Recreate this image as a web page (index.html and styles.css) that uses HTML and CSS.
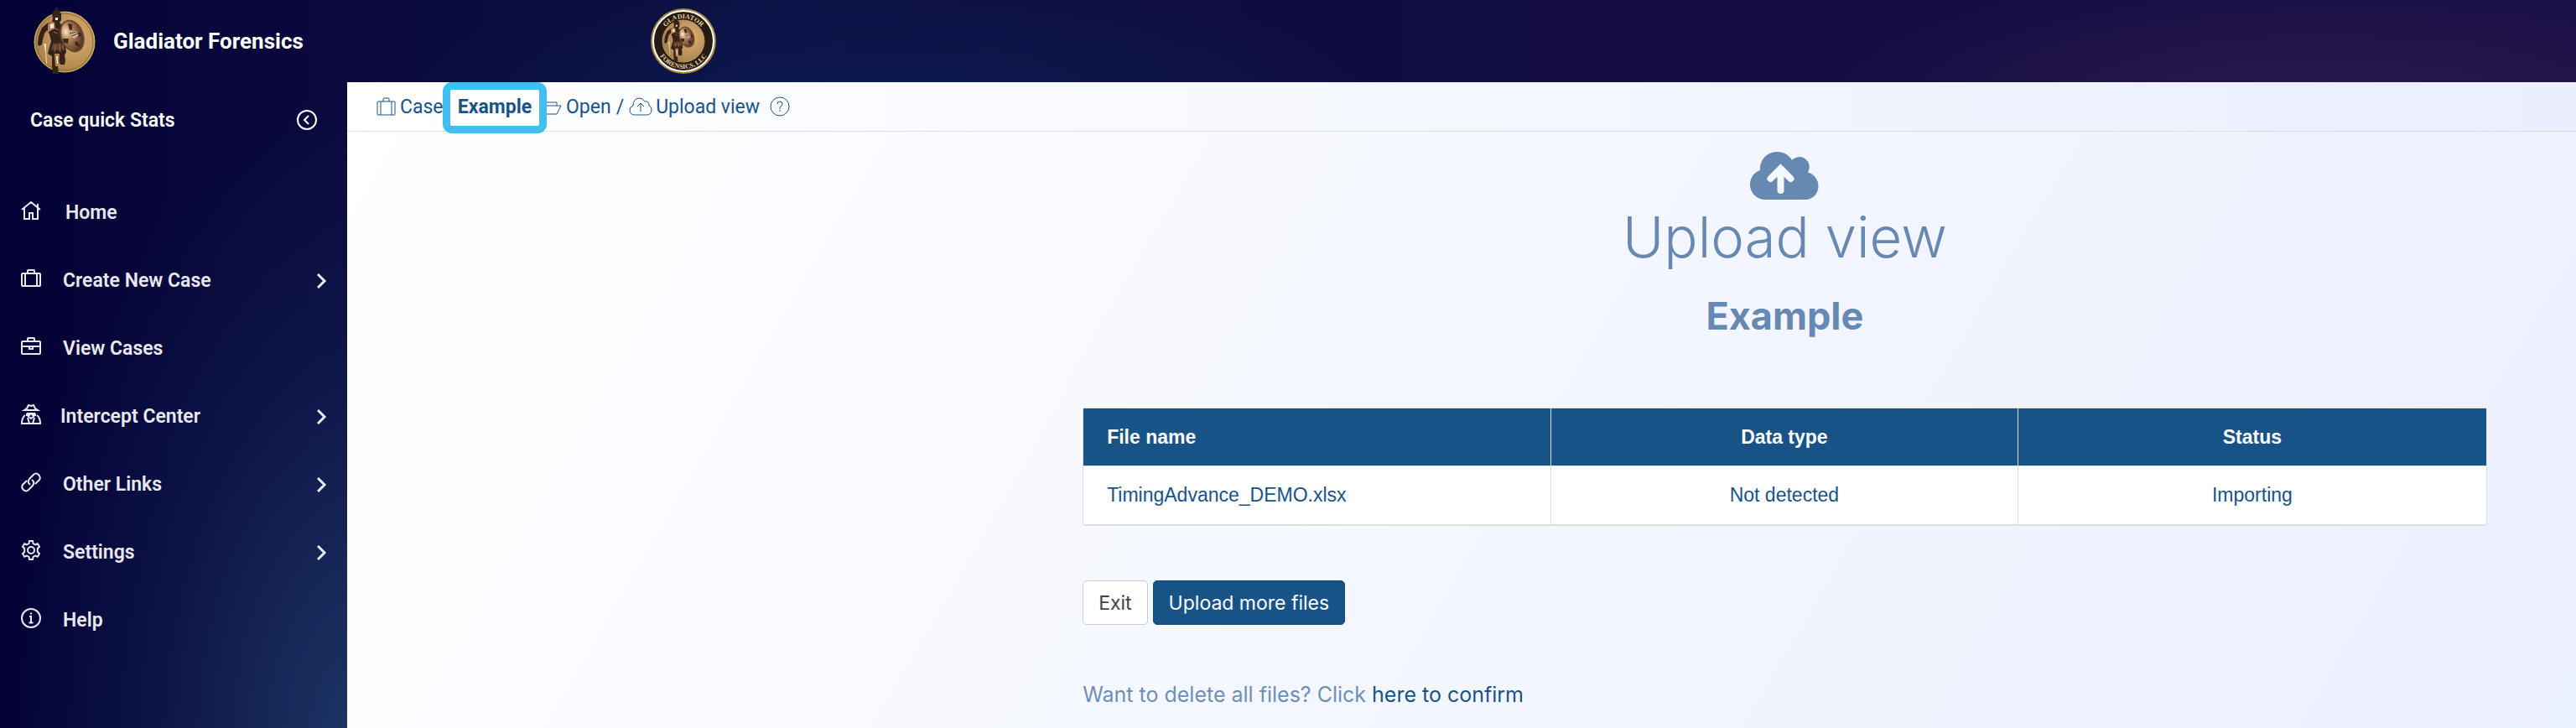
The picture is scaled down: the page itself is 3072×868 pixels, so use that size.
FILE: index.html
```html
<!DOCTYPE html>
<html lang="en">
<head>
  <meta charset="UTF-8">
  <meta name="viewport" content="width=device-width, initial-scale=1.0">
  <title>Upload view - Gladiator Forensics</title>
  <link rel="stylesheet" href="styles.css">
</head>
<body>
  <!-- shared gladiator figure -->
  <svg width="0" height="0" class="defs">
    <defs>
      <radialGradient id="gold" cx="65%" cy="40%" r="65%">
        <stop offset="0" stop-color="#dcb273"/>
        <stop offset="1" stop-color="#a9814b"/>
      </radialGradient>
      <radialGradient id="shield" cx="30%" cy="30%" r="75%">
        <stop offset="0" stop-color="#ffe3c4"/>
        <stop offset="0.35" stop-color="#b9855a"/>
        <stop offset="1" stop-color="#4f3220"/>
      </radialGradient>
      <symbol id="gladiator" viewBox="0 0 74 80">
        <path d="M27 0h2l1 4 3 3 0 8-2 3 4 4 3 8-1 10 1 6 1 7-2 4 1 6-1 5-5 0-2-4-1 6 1 9-7 0-1-10 0-11-5-3 2-8 2-7-2-8-3-5-3 4-2 7-1 6-3 2-2-2 1-10 4-10 6-5 6-2 1-5-1-3 1-4 2-1z" fill="#35231a"/>
        <path d="M17 20q5-5 8-2l1 7-5 2-4 3zM25 55h6l-1 15h-4z" fill="#b98058"/>
        <path d="M20 20l4-1v5l-4 1zM27 58h2v9h-1zM26 12h3v3h-3z" fill="#ffe9cf"/>
        <path d="M23 43l10-1 3 7-6 2-9-1z" fill="#60432d"/>
        <path d="M26 45l-1 8M31 44l1 9M35 44l1 7M24 24l6 3M24 29l5 2" stroke="#9b6f49" stroke-width="1"/>
        <path d="M12 43l2 10 1 14h1l-1-16 0-8z" fill="#ead9b5"/>
        <ellipse cx="46" cy="34" rx="13" ry="19" transform="rotate(-20 46 34)" fill="url(#shield)" stroke="#6e4a2c" stroke-width="2"/>
        <path d="M41 19l5 1 0 6-3 1zM55 29l3 4-4 2-2-3zM52 40l4 7-6-2-1-4zM35 37l7 0-1 6-5-1z" fill="#3d281b"/>
        <path d="M42 28l9 0 3 5-5 4-5-2z" fill="#c9ad92"/>
        <path d="M43 31l8-2M45 34l8-3" stroke="#4a3122" stroke-width="1"/>
      </symbol>
    </defs>
  </svg>

  <header class="topbar">
    <a href="#" class="brand">
      <svg class="brand-logo" viewBox="0 0 74 80">
        <circle cx="37" cy="41" r="36" fill="url(#gold)" stroke="#d8b660" stroke-width="1"/>
        <circle cx="37" cy="41" r="34" fill="none" stroke="#8f6d35" stroke-width="1"/>
        <use href="#gladiator" width="74" height="80"/>
      </svg>
      <span>Gladiator Forensics</span>
    </a>
    <svg class="seal" viewBox="0 0 80 80">
      <defs>
        <path id="arcTop" d="M13 40a27 27 0 0 1 54 0"/>
        <path id="arcBottom" d="M7 40a33 33 0 0 0 66 0"/>
      </defs>
      <circle cx="40" cy="40" r="39" fill="#a9853f"/>
      <circle cx="40" cy="40" r="36" fill="#251b12" stroke="#fff" stroke-width="2"/>
      <circle cx="40" cy="40" r="25" fill="url(#gold)" stroke="#b59865" stroke-width="1"/>
      <text class="seal-text"><textPath href="#arcTop" startOffset="50%" text-anchor="middle">GLADIATOR</textPath></text>
      <text class="seal-text"><textPath href="#arcBottom" startOffset="50%" text-anchor="middle">FORENSICS, LLC</textPath></text>
      <use href="#gladiator" x="14" y="13" width="48" height="52"/>
    </svg>
  </header>

  <div class="layout">
    <nav class="sidebar">
      <div class="stats">
        <span>Case quick Stats</span>
        <button class="collapse" aria-label="Collapse menu">
          <svg viewBox="0 0 24 24"><circle cx="12" cy="12" r="11"/><path d="M14 7l-5 5 5 5"/></svg>
        </button>
      </div>
      <ul class="menu">
        <li><a href="#" class="home">
          <svg class="icon" viewBox="0 0 24 24"><path d="M1 11L12 2l11 9M4 9v13h6v-7h4v7h6V9M20 8V4"/></svg>
          <span>Home</span>
        </a></li>
        <li><a href="#">
          <svg class="icon" viewBox="0 0 24 24"><rect x="1" y="6" width="22" height="15" rx="1"/><path d="M8 6V3q0-1 1-1h6q1 0 1 1v3M5 6v15M19 6v15"/></svg>
          <span>Create New Case</span>
          <svg class="chevron" viewBox="0 0 12 18"><path d="M1 1l8 8-8 8"/></svg>
        </a></li>
        <li><a href="#">
          <svg class="icon" viewBox="0 0 24 24"><rect x="1" y="6" width="22" height="15" rx="1"/><path d="M8 6V3q0-1 1-1h6q1 0 1 1v3M1 12h22M10 12v3h4v-3"/></svg>
          <span>View Cases</span>
        </a></li>
        <li><a href="#" class="intercept">
          <svg class="icon" viewBox="0 0 24 24"><path d="M4 7h16l-3-2-2-4-3 1-3-1-2 4zM7 11h10M7 11v2h3l2-2 2 2h3v-2M8 14l4 3 4-3M5 13q-4 3-4 10h22q0-7-4-10M8 16l2 7M16 16l-2 7"/></svg>
          <span>Intercept Center</span>
          <svg class="chevron" viewBox="0 0 12 18"><path d="M1 1l8 8-8 8"/></svg>
        </a></li>
        <li><a href="#">
          <svg class="icon" viewBox="0 0 24 24"><path d="M11 15q-4-3-1-7l5-5q3-3 6 0t1 6l-5 5M13 9q4 3 1 7l-5 5q-3 3-6 0t-1-6l5-5"/></svg>
          <span>Other Links</span>
          <svg class="chevron" viewBox="0 0 12 18"><path d="M1 1l8 8-8 8"/></svg>
        </a></li>
        <li><a href="#">
          <svg class="icon" viewBox="0 0 24 24"><circle cx="12" cy="12" r="4"/><path d="M9.500 4L10 1h4l.5 3 2.500 1.500L19.800 4.300l2.200 3.500L19.800 10v4l2.200 2.200-2.200 3.500L17 18.500 14.500 20l-.5 3h-4l-.5-3L7 18.500l-2.800 1.200L2 16.200 4.200 14v-4L2 7.800l2.200-3.500L7 5.500z"/></svg>
          <span>Settings</span>
          <svg class="chevron" viewBox="0 0 12 18"><path d="M1 1l8 8-8 8"/></svg>
        </a></li>
        <li><a href="#">
          <svg class="icon" viewBox="0 0 24 24"><circle cx="12" cy="12" r="11"/><path d="M10 10h2v7M9.500 17.500h5M12 5.500v2" stroke-width="2"/></svg>
          <span>Help</span>
        </a></li>
      </ul>
    </nav>

    <main class="main">
      <div class="breadcrumb">
        <a href="#" class="crumb case">
          <svg viewBox="0 0 24 24"><rect x="1" y="6" width="21" height="16" rx="1"/><path d="M8 6V3q0-1 1-1h5q1 0 1 1v3M5 6v16M18 6v16"/></svg>
          <span>Case</span>
        </a>
        <strong class="highlight">Example</strong>
        <a href="#" class="crumb">
          <svg class="folder" viewBox="0 0 32 24"><path d="M3 21V4h8l2 3h12v4M3 21l5-10h22l-5 10z"/></svg>
          <span>Open</span>
        </a>
        <span class="slash">/</span>
        <a href="#" class="crumb">
          <svg class="cloud" viewBox="0 0 28 24"><path d="M7 22q-6 0-6-6 0-4 4-5 0-8 7-9 5 0 7 4 5-1 5 5 3 1 3 5 0 6-6 6zM14 18V8M10 12l4-4 4 4"/></svg>
          <span>Upload view</span>
        </a>
        <button class="hint" aria-label="Help">
          <svg viewBox="0 0 24 24"><circle cx="12" cy="12" r="11"/><path d="M9 9q0-3 3-3t3 3q0 2-2 3-1 1-1 3M12 16v2"/></svg>
        </button>
      </div>

      <section class="content">
        <svg class="upload-icon" viewBox="0 0 82 57">
          <path d="M18 57A18 18 0 0 1 0 39c0-8 5-15 12-17a20 20 0 0 1 20-22c8 0 15 4 18 10a12 12 0 0 1 19 14.500A17 17 0 0 1 81.500 41c0 9-7 16-15.500 16z" fill="#6788b2"/>
          <path d="M36.500 46V22M24.500 32l12-12 12 12" class="arrow"/>
        </svg>
        <h1>Upload view</h1>
        <h2>Example</h2>

        <table class="files">
          <thead>
            <tr><th>File name</th><th>Data type</th><th>Status</th></tr>
          </thead>
          <tbody>
            <tr><td>TimingAdvance_DEMO.xlsx</td><td>Not detected</td><td>Importing</td></tr>
          </tbody>
        </table>

        <div class="actions">
          <button class="btn">Exit</button>
          <button class="btn btn-primary">Upload more files</button>
        </div>

        <p class="delete">Want to delete all files? Click <a href="#">here to confirm</a></p>
      </section>
    </main>
  </div>
</body>
</html>
```
FILE: styles.css
```css
* {
  box-sizing: border-box;
}
body {
  margin: 0;
  min-height: 100vh;
  display: flex;
  flex-direction: column;
  font-family: Roboto, sans-serif;
  font-size: 23px;
  color: #185388;
  background:
    radial-gradient(ellipse 440px 800px at 440px 900px, #1d3766, rgba(20, 40, 90, 0.4) 60%, transparent),
    radial-gradient(ellipse 600px 160px at 2760px 130px, #2c1a4c, transparent),
    radial-gradient(ellipse 600px 160px at 1050px 130px, #0c1b4e, transparent),
    linear-gradient(90deg, #030136 0, #0a083c 400px, #0c0f45 900px, #100c42 1600px, #150d42 2300px, #190f46 100%);
}
a {
  color: inherit;
  text-decoration: none;
}
svg {
  fill: none;
  stroke: currentColor;
  flex: none;
}
.defs {
  position: absolute;
}
symbol {
  stroke: none;
}
button {
  font: inherit;
  color: inherit;
  cursor: pointer;
}

/* top bar */
.topbar {
  display: flex;
  height: 98px;
  align-items: center;
  flex: none;
}
.brand {
  display: flex;
  align-items: center;
  gap: 21px;
  width: 775px;
  padding-left: 40px;
  font-size: 26px;
  font-weight: 700;
  color: #fff;
}
.brand-logo {
  width: 74px;
  height: 80px;
}
.brand svg, .seal {
  stroke: none;
}
.seal {
  width: 80px;
  height: 80px;
}
.seal-text {
  font-family: "Liberation Serif", serif;
  font-size: 8px;
  font-weight: 700;
  fill: #e8cf9a;
}

/* sidebar */
.layout {
  display: flex;
  flex: 1;
}
.sidebar {
  width: 414px;
  flex: none;
  color: #e8e8f0;
  font-weight: 600;
}
.stats {
  display: flex;
  justify-content: space-between;
  align-items: center;
  height: 90px;
  padding: 0 36px;
  color: #fff;
}
.collapse, .hint {
  display: flex;
  padding: 0;
  border: 0;
  background: none;
}
.collapse svg, .hint svg {
  width: 24px;
  height: 24px;
  stroke-width: 2;
}
.menu {
  list-style: none;
  margin: 0;
  padding: 25px 24px 0;
}
.menu a {
  display: flex;
  align-items: center;
  height: 81px;
}
.icon {
  width: 26px;
  height: 24px;
  margin: 0 25px 6px 0;
  stroke-width: 2;
}
.home .icon {
  margin-right: 28px;
}
.intercept .icon {
  margin-right: 22px;
}
.chevron {
  width: 12px;
  height: 18px;
  margin-left: auto;
  stroke-width: 3;
}

/* main */
.main {
  flex: 1;
  background: linear-gradient(120deg, #fff, #f4f7ff 50%, #ebf0ff);
}
.breadcrumb {
  display: flex;
  align-items: center;
  height: 59px;
  padding-left: 35px;
  border-bottom: 1px solid #dcdcdc;
  background: linear-gradient(90deg, #fff, #f4f7ff 55%, #eaeefe);
}
.crumb {
  display: flex;
  align-items: center;
  gap: 4px;
}
.breadcrumb svg {
  width: 24px;
  height: 24px;
  stroke-width: 1;
}
.case {
  width: 79px;
}
.breadcrumb .folder {
  width: 32px;
  margin-left: -13px;
}
.breadcrumb .cloud {
  width: 28px;
}
.slash {
  margin: 0 6px;
}
.breadcrumb .hint {
  margin-left: 12px;
}
.highlight {
  position: relative;
  z-index: 1;
  align-self: flex-start;
  width: 124px;
  height: 61px;
  border: 9px solid #41bff0;
  border-radius: 11px;
  background: #fff;
  line-height: 41px;
  text-align: center;
}
.content {
  padding: 24px 4% 24px 33%;
  font-family: Inter, sans-serif;
  text-align: center;
}
.upload-icon {
  display: block;
  width: 82px;
  height: 57px;
  margin: 0 auto;
  stroke: none;
}
.upload-icon .arrow {
  stroke: #f5f8ff;
  stroke-width: 8;
  stroke-linecap: round;
}
h1, h2 {
  margin: 0;
  color: #6788b2;
}
h1 {
  font-size: 67px;
  font-weight: 300;
  line-height: 90px;
}
h2 {
  font-size: 45px;
  font-weight: 700;
  line-height: 60px;
  margin: 19px 0 79px;
}
.files {
  width: 100%;
  table-layout: fixed;
  border-collapse: separate;
  border-spacing: 0;
  border: 1px solid #dedede;
  border-bottom-width: 2px;
  border-radius: 4px;
  background: #fff;
  font-family: "Liberation Sans", sans-serif;
}
.files th, .files td {
  height: 69px;
  padding: 0 28px;
  border-right: 1px solid #dedede;
}
.files th {
  background: #185388;
  color: #fff;
  border-bottom: 1px solid #dedede;
}
.files th:first-child, .files td:first-child {
  text-align: left;
}
.files th:last-child, .files td:last-child {
  border-right: 0;
}
.actions {
  display: flex;
  gap: 6px;
  margin-top: 65px;
}
.btn {
  height: 53px;
  padding: 0 18px;
  border: 1px solid #ccc;
  border-radius: 5px;
  background: #fff;
  color: #444;
}
.btn-primary {
  border-color: #14487a;
  background: #185388;
  color: #fff;
}
.delete {
  margin: 68px 0 0;
  font-size: 25px;
  line-height: 30px;
  text-align: left;
  color: #6d90b8;
}
.delete a {
  color: #185388;
}
```
